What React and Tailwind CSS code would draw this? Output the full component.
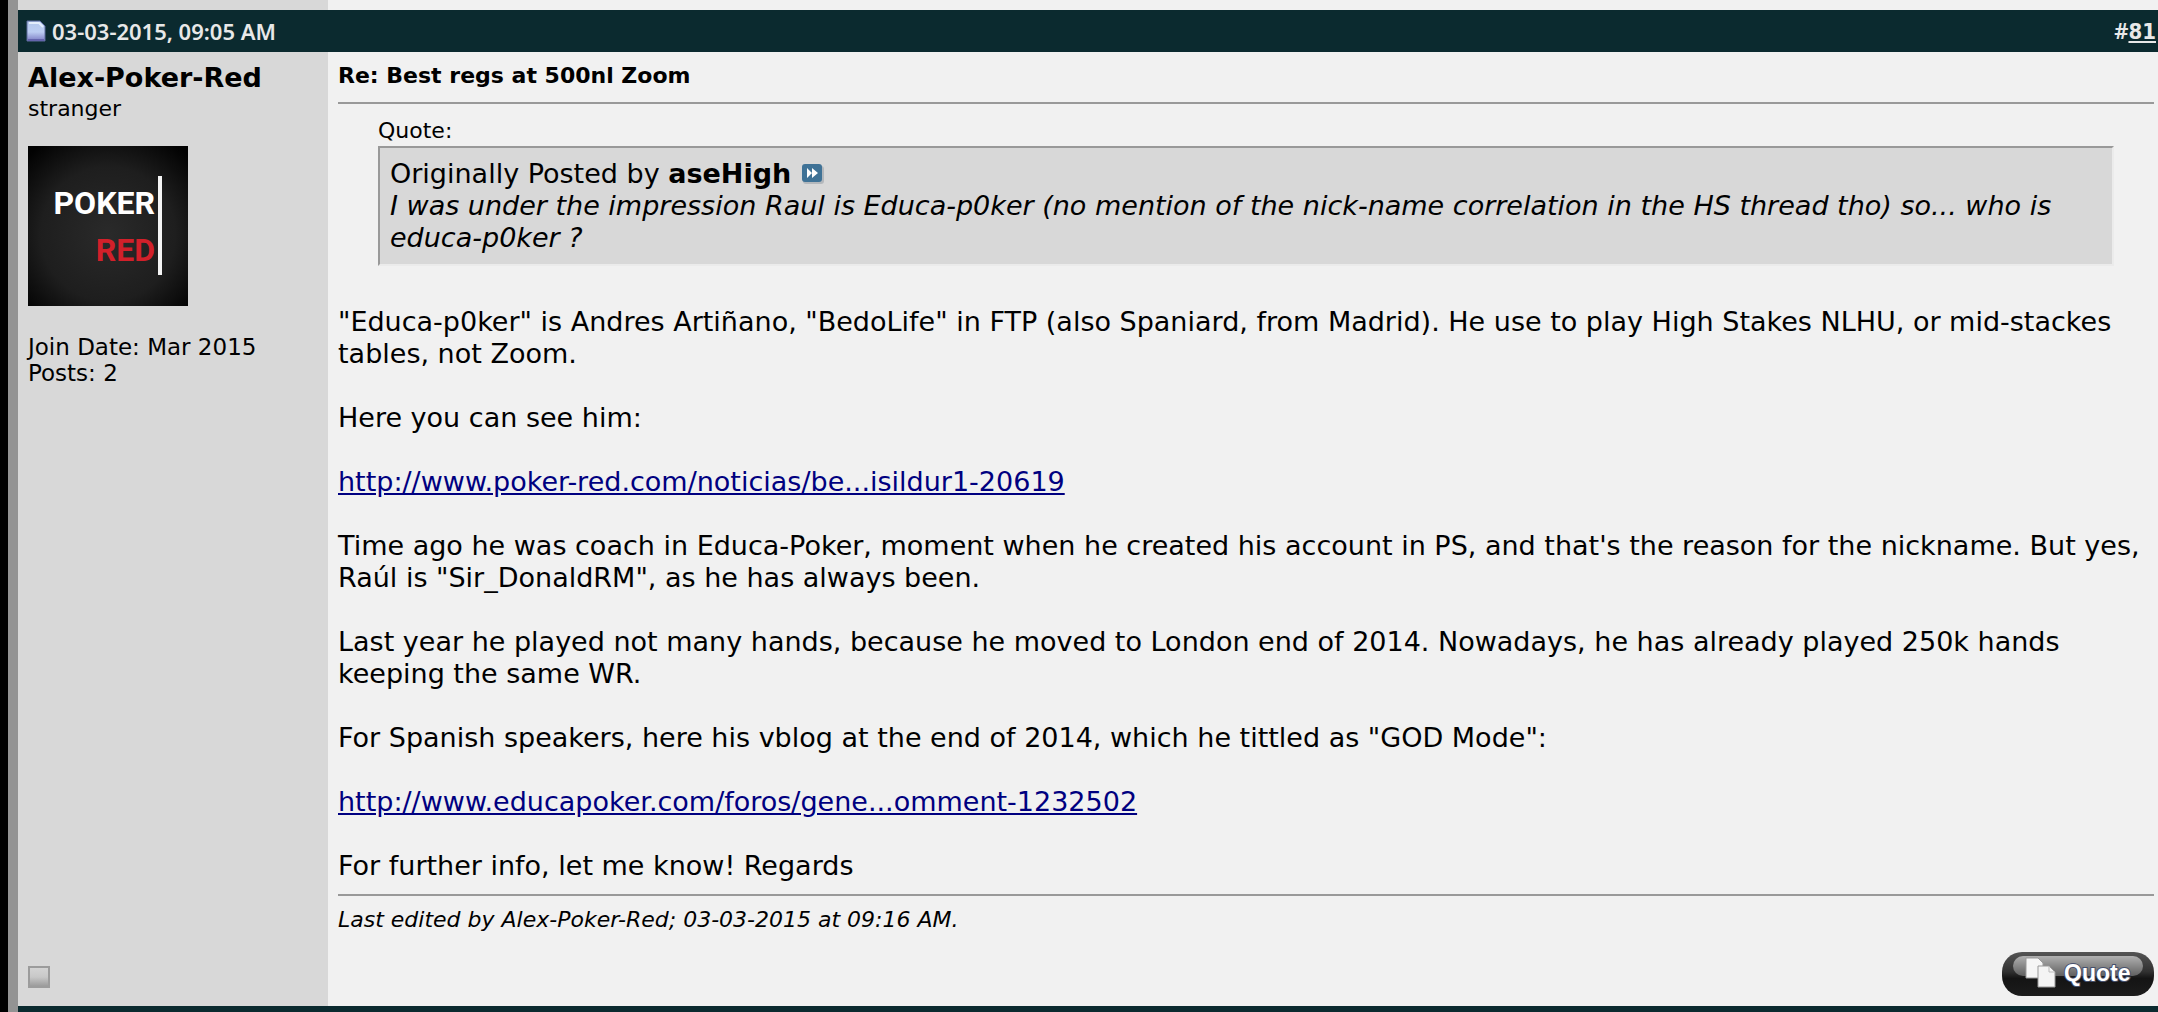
function DocIcon() {
  return (
    <svg width="20" height="22" viewBox="0 0 20 22" aria-hidden="true">
      <defs>
        <linearGradient id="doc" x1="0" y1="0" x2="0" y2="1">
          <stop offset="0" stopColor="#b4c8ec" />
          <stop offset="0.55" stopColor="#bccdf2" />
          <stop offset="1" stopColor="#7c7cc4" />
        </linearGradient>
      </defs>
      <path d="M1 1h13l5 5v15H1z" fill="url(#doc)" stroke="#5c6a9c" strokeWidth="1" />
      <path d="M3 3h10l4 4" fill="none" stroke="#e4eefc" strokeWidth="2" />
      <path d="M2 20h16" stroke="#6464ac" strokeWidth="2" />
    </svg>
  )
}

function Avatar() {
  return (
    <svg width="160" height="160" viewBox="0 0 160 160" role="img" aria-label="Poker Red">
      <defs>
        <radialGradient id="avatar" cx="0.5" cy="0.55" r="0.7">
          <stop offset="0" stopColor="#2a2a2a" />
          <stop offset="0.6" stopColor="#1e1e1e" />
          <stop offset="1" stopColor="#020202" />
        </radialGradient>
      </defs>
      <rect width="160" height="160" fill="url(#avatar)" />
      <g fontFamily="Roboto, sans-serif" fontSize="32" fontWeight="700" textAnchor="end">
        <text x="127" y="68" fill="#fff">POKER</text>
        <text x="127" y="115" fill="#d2202a">RED</text>
      </g>
      <rect x="130" y="30" width="4" height="99" fill="#f4f4f4" />
    </svg>
  )
}

function ViewPostIcon() {
  return (
    <svg width="24" height="20" viewBox="0 0 24 20" aria-hidden="true">
      <rect x="2" y="2" width="21" height="18" rx="3" fill="#b4b8bc" />
      <rect x="1" y="0" width="20" height="18" rx="3" fill="#3f7296" />
      <path d="M6 4l5 5-5 5zM11 4l6 5-6 5z" fill="#fff" />
    </svg>
  )
}

function QuoteButton() {
  return (
    <button type="button" aria-label="Quote" className="block cursor-pointer">
      <svg width="152" height="44" viewBox="0 0 152 44">
        <defs>
          <linearGradient id="pill" x1="0" y1="0" x2="0" y2="1">
            <stop offset="0" stopColor="#555" />
            <stop offset="0.45" stopColor="#303030" />
            <stop offset="0.6" stopColor="#141414" />
            <stop offset="1" stopColor="#1c1c1c" />
          </linearGradient>
          <linearGradient id="shine" x1="0" y1="0" x2="0" y2="1">
            <stop offset="0" stopColor="#b0b0b0" />
            <stop offset="1" stopColor="#606060" />
          </linearGradient>
        </defs>
        <rect width="152" height="44" rx="20" fill="url(#pill)" />
        <rect x="11" y="4" width="130" height="20" rx="10" fill="url(#shine)" />
        <path d="M24 6h12l5 5v15H24z" fill="#f6f6f6" stroke="#999" />
        <path d="M36 14h11l6 6v15H36z" fill="#f4f4f4" stroke="#999" />
        <path d="M47 14v6h6" fill="none" stroke="#bbb" />
        <text x="62" y="29" fontSize="23" fontWeight="700" fontFamily="'Liberation Sans', sans-serif" fill="#fff" stroke="#46506c" strokeWidth="2" paintOrder="stroke">Quote</text>
      </svg>
    </button>
  )
}

export default function App() {
  return (
    <div className="flex min-h-screen border-l-8 border-black bg-[#f1f1f1] font-['DejaVu_Sans',sans-serif] text-black">
      <div className="w-[10px] shrink-0 bg-[#939393]" />
      <div className="flex min-w-0 flex-1 flex-col">
        {/* End of the previous post */}
        <div className="flex h-[10px]">
          <div className="w-[310px] bg-[#d8d8d8]" />
        </div>

        <header className="flex h-[42px] items-center justify-between bg-[#0b2a2f] pl-2 pr-[2px] font-['Noto_Sans',sans-serif] text-[22px] font-semibold text-[#e8e8e8]">
          <div className="flex items-center gap-[6px]">
            <DocIcon />
            <span>03-03-2015, 09:05 AM</span>
          </div>
          <div>
            #<a href="#81" className="font-['DejaVu_Sans_Condensed','DejaVu_Sans',sans-serif] font-bold underline decoration-2 underline-offset-2">81</a>
          </div>
        </header>

        <article className="flex flex-1">
          <aside className="flex w-[310px] shrink-0 flex-col bg-[#d8d8d8] px-[10px] pt-2 text-[22px] leading-[26px]">
            <a href="#user" className="text-[27px] font-bold leading-9">Alex-Poker-Red</a>
            <div>stranger</div>
            <div className="mt-6">
              <Avatar />
            </div>
            <div className="mt-7 text-[23px]">
              <div>Join Date: Mar 2015</div>
              <div>Posts: 2</div>
            </div>
            <div className="mb-[18px] mt-auto size-[22px] border-2 border-[#9c9c9c] bg-linear-to-b from-[#d4d4d4] via-[#c8c8c8] to-[#9c9c9c]" />
          </aside>

          <div className="flex min-w-0 flex-1 flex-col pl-[10px] pr-1">
            <h1 className="mt-2 text-[22px] font-bold leading-8">Re: Best regs at 500nl Zoom</h1>
            <hr className="mt-[10px] border-t-2 border-[#999]" />

            <div className="mx-10 mt-3">
              <div className="text-[22px] leading-[30px]">Quote:</div>
              <blockquote className="border-2 border-b-[#ebebeb] border-l-[#999] border-r-[#ebebeb] border-t-[#999] bg-[#d8d8d8] px-[10px] pb-[10px] pt-[10px] text-[27px] leading-8">
                <div className="flex items-center gap-[10px]">
                  <span>Originally Posted by <strong>aseHigh</strong></span>
                  <a href="#post" aria-label="View Post"><ViewPostIcon /></a>
                </div>
                <p className="italic">
                  I was under the impression Raul is Educa-p0ker (no mention of the nick-name correlation in the HS thread tho) so... who is educa-p0ker ?
                </p>
              </blockquote>
            </div>

            <div className="mt-10 space-y-8 text-[27px] leading-8">
              <p>"Educa-p0ker" is Andres Artiñano, "BedoLife" in FTP (also Spaniard, from Madrid). He use to play High Stakes NLHU, or mid-stackes tables, not Zoom.</p>
              <p>Here you can see him:</p>
              <p><a href="#poker-red" className="text-[#000080] underline">http://www.poker-red.com/noticias/be...isildur1-20619</a></p>
              <p>Time ago he was coach in Educa-Poker, moment when he created his account in PS, and that's the reason for the nickname. But yes, Raúl is "Sir_DonaldRM", as he has always been.</p>
              <p>Last year he played not many hands, because he moved to London end of 2014. Nowadays, he has already played 250k hands keeping the same WR.</p>
              <p>For Spanish speakers, here his vblog at the end of 2014, which he tittled as "GOD Mode":</p>
              <p><a href="#educapoker" className="text-[#000080] underline">http://www.educapoker.com/foros/gene...omment-1232502</a></p>
              <p>For further info, let me know! Regards</p>
            </div>

            <hr className="mt-3 border-t-2 border-[#999]" />
            <div className="mt-2 text-[22px] italic leading-8">Last edited by Alex-Poker-Red; 03-03-2015 at 09:16 AM.</div>

            <div className="mb-[10px] mt-auto flex justify-end">
              <QuoteButton />
            </div>
          </div>
        </article>

        <div className="h-[6px] bg-[#0b2a2f]" />
      </div>
    </div>
  )
}
